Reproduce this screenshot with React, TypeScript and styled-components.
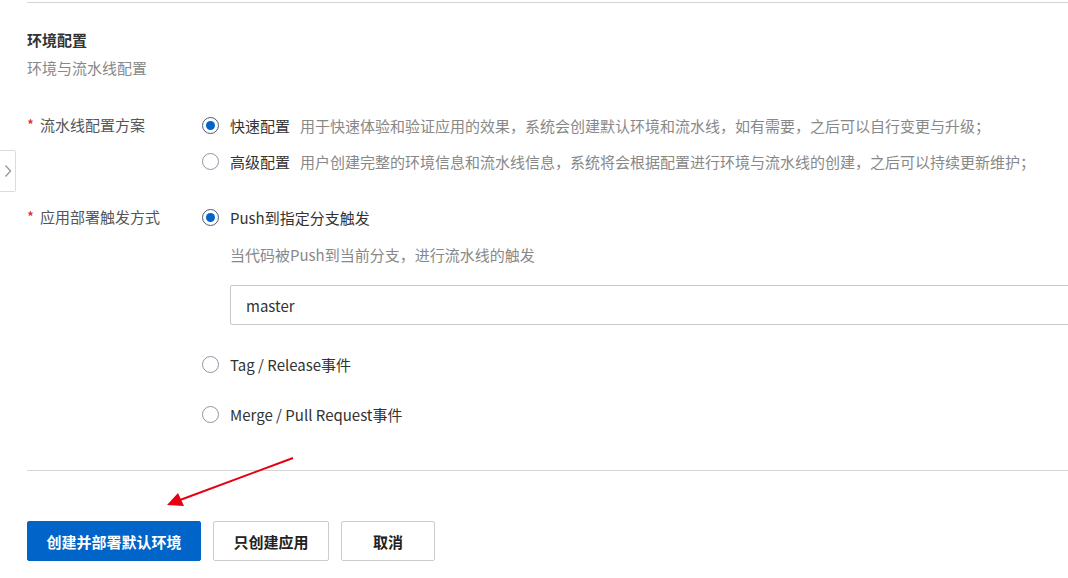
import styled, { createGlobalStyle } from "styled-components";

const GlobalStyle = createGlobalStyle`
  html, body {
    margin: 0;
    padding: 0;
    background: #fff;
    overflow: hidden;
  }
  body {
    font-family: "Noto Sans CJK SC", "Noto Sans", sans-serif;
    font-size: 15px;
    color: #333;
  }
`;

const Page = styled.div`
  position: relative;
  width: 1068px;
  height: 578px;
  overflow: hidden;
  padding-left: 27px;
  box-sizing: border-box;
`;

const Section = styled.div`
  margin-top: 2px;
  border-top: 1px solid #d4d4d4;
  width: 1100px;
`;

const Title = styled.div`
  margin-top: 27px;
  line-height: 20px;
  font-weight: 700;
  color: #333;
`;

const SubTitle = styled.div`
  margin-top: 8px;
  line-height: 20px;
  color: #888;
`;

const Form = styled.div`
  margin-top: 29px;
  display: flex;
  flex-direction: column;
  gap: 20px;
`;

const Row = styled.div`
  display: flex;
  align-items: flex-start;
`;

const Label = styled.div`
  width: 175px;
  flex-shrink: 0;
  line-height: 36px;
  color: #555;
  span {
    color: #e02020;
    margin-right: 6px;
  }
`;

const Options = styled.div`
  display: flex;
  flex-direction: column;
`;

const Option = styled.label<{ $spaced?: boolean }>`
  display: flex;
  align-items: center;
  height: 36px;
  margin-top: ${(p) => (p.$spaced ? "14px" : "0")};
  white-space: nowrap;
  color: #333;
`;

const Radio = styled.span<{ $checked?: boolean }>`
  width: 17px;
  height: 17px;
  box-sizing: border-box;
  border-radius: 50%;
  border: 1px solid ${(p) => (p.$checked ? "#4a5c78" : "#8e96a3")};
  margin-right: 11px;
  display: flex;
  align-items: center;
  justify-content: center;
  flex-shrink: 0;
  &::after {
    content: "";
    width: 9px;
    height: 9px;
    border-radius: 50%;
    background: #0064c8;
    display: ${(p) => (p.$checked ? "block" : "none")};
  }
`;

const Desc = styled.span`
  margin-left: 10px;
  color: #888;
`;

const Help = styled.div`
  margin-top: 10px;
  margin-left: 28px;
  line-height: 20px;
  color: #888;
`;

const Input = styled.input`
  margin-top: 20px;
  margin-left: 28px;
  width: 880px;
  height: 40px;
  box-sizing: border-box;
  border: 1px solid #c8c8c8;
  border-radius: 2px;
  padding: 0 15px;
  font-family: inherit;
  font-size: 15px;
  color: #333;
  margin-bottom: 21px;
  outline: none;
`;

const Divider = styled.div`
  margin-top: 38px;
  border-top: 1px solid #d4d4d4;
  width: 1100px;
`;

const Actions = styled.div`
  margin-top: 50px;
  display: flex;
  gap: 12px;
`;

const Button = styled.button<{ $primary?: boolean; $w: number }>`
  width: ${(p) => p.$w}px;
  height: 40px;
  border-radius: 2px;
  font-family: inherit;
  font-size: 15px;
  font-weight: 700;
  cursor: pointer;
  border: 1px solid ${(p) => (p.$primary ? "#0064c8" : "#cccccc")};
  background: ${(p) => (p.$primary ? "#0064c8" : "#fff")};
  color: ${(p) => (p.$primary ? "#fff" : "#222")};
`;

const SideTab = styled.div`
  position: absolute;
  left: 0;
  top: 150px;
  width: 16px;
  height: 42px;
  box-sizing: border-box;
  border: 1px solid #dcdcdc;
  border-left: none;
  border-radius: 0 2px 2px 0;
  background: #fff;
  display: flex;
  align-items: center;
  justify-content: center;
`;

const Arrow = styled.svg`
  position: absolute;
  left: 0;
  top: 0;
  pointer-events: none;
`;

const App = () => {
  return (
    <Page>
      <GlobalStyle />
      <Section>
        <Title>环境配置</Title>
        <SubTitle>环境与流水线配置</SubTitle>
        <Form>
          <Row>
            <Label>
              <span>*</span>流水线配置方案
            </Label>
            <Options>
              <Option>
                <Radio $checked />
                快速配置
                <Desc>
                  用于快速体验和验证应用的效果，系统会创建默认环境和流水线，如有需要，之后可以自行变更与升级；
                </Desc>
              </Option>
              <Option>
                <Radio />
                高级配置
                <Desc>
                  用户创建完整的环境信息和流水线信息，系统将会根据配置进行环境与流水线的创建，之后可以持续更新维护；
                </Desc>
              </Option>
            </Options>
          </Row>
          <Row>
            <Label>
              <span>*</span>应用部署触发方式
            </Label>
            <Options>
              <Option>
                <Radio $checked />
                Push到指定分支触发
              </Option>
              <Help>当代码被Push到当前分支，进行流水线的触发</Help>
              <Input defaultValue="master" />
              <Option>
                <Radio />
                Tag / Release事件
              </Option>
              <Option $spaced>
                <Radio />
                Merge / Pull Request事件
              </Option>
            </Options>
          </Row>
        </Form>
        <Divider />
        <Actions>
          <Button $primary $w={174}>
            创建并部署默认环境
          </Button>
          <Button $w={116}>只创建应用</Button>
          <Button $w={94}>取消</Button>
        </Actions>
      </Section>
      <SideTab>
        <svg width="10" height="14" viewBox="0 0 10 14">
          <path d="M2.5 1.5 L7.5 7 L2.5 12.5" fill="none" stroke="#9a9a9a" strokeWidth="1.4" />
        </svg>
      </SideTab>
      <Arrow width="1068" height="578" viewBox="0 0 1068 578">
        <line x1="293" y1="458" x2="180" y2="500" stroke="#e60012" strokeWidth="2" />
        <polygon points="167,505 178,493 184,506" fill="#e60012" />
      </Arrow>
    </Page>
  );
};

export default App;
